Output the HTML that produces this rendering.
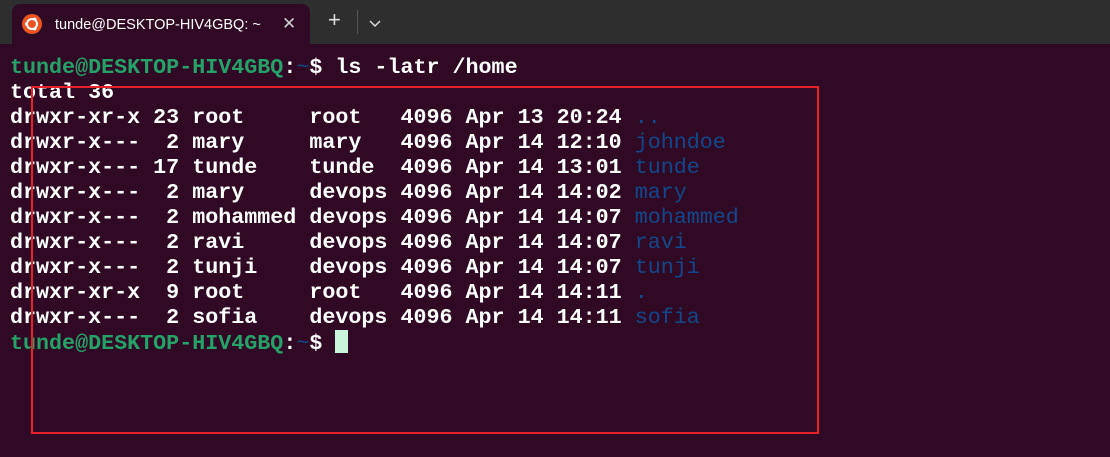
<!DOCTYPE html>
<html><head><style>
body{margin:0;width:1110px;height:457px;background:#300a24;overflow:hidden;position:relative;font-family:"Liberation Sans",sans-serif}
.bar{position:absolute;left:0;top:0;width:1110px;height:44px;background:#2e2e2e}
.tab{position:absolute;left:12px;top:4px;width:298px;height:40px;background:#300a24;border-radius:8px 8px 0 0}
.tt{position:absolute;left:43px;top:13px;color:#fff;font-size:14.5px}
.logo{position:absolute;left:10px;top:10px;width:20px;height:20px;border-radius:50%;background:#e95420}
.x{position:absolute;left:270px;top:10px;color:#ccc;font-size:17px}
.plus{position:absolute;left:328px;top:7px;color:#ddd;font-size:22px}
.sep{position:absolute;left:357px;top:10px;width:1px;height:24px;background:#555}
.chev{position:absolute;left:369px;top:20px}
pre{position:absolute;left:10px;top:55px;margin:0;font-family:"Liberation Mono",monospace;font-size:21.7px;line-height:25px;font-weight:bold;color:#fff}
.g{color:#26a269}.b{color:#12488b;font-weight:normal}
.cur{display:inline-block;width:13px;height:23px;background:#c8f5dc;vertical-align:-4px}
.box{position:absolute;left:31px;top:86px;width:784px;height:344px;border:2px solid #e8202a}
</style></head><body>
<div class="bar"><div class="tab">
<div class="logo"><svg width="20" height="20" viewBox="0 0 20 20"><circle cx="10" cy="10" r="5" fill="none" stroke="#fff" stroke-width="2"/><circle cx="4.5" cy="10" r="1.6" fill="#fff"/><circle cx="12.8" cy="5.2" r="1.6" fill="#fff"/><circle cx="12.8" cy="14.8" r="1.6" fill="#fff"/></svg></div>
<div class="tt">tunde@DESKTOP-HIV4GBQ: ~</div><div class="x">✕</div></div>
<div class="plus">+</div><div class="sep"></div>
<svg class="chev" width="12" height="8" viewBox="0 0 12 8"><path d="M1 1l5 5 5-5" stroke="#ddd" stroke-width="1.5" fill="none"/></svg></div>
<pre><span class="g">tunde@DESKTOP-HIV4GBQ</span>:<span class="b">~</span>$ ls -latr /home
total 36
drwxr-xr-x 23 root     root   4096 Apr 13 20:24 <span class="b">..</span>
drwxr-x---  2 mary     mary   4096 Apr 14 12:10 <span class="b">johndoe</span>
drwxr-x--- 17 tunde    tunde  4096 Apr 14 13:01 <span class="b">tunde</span>
drwxr-x---  2 mary     devops 4096 Apr 14 14:02 <span class="b">mary</span>
drwxr-x---  2 mohammed devops 4096 Apr 14 14:07 <span class="b">mohammed</span>
drwxr-x---  2 ravi     devops 4096 Apr 14 14:07 <span class="b">ravi</span>
drwxr-x---  2 tunji    devops 4096 Apr 14 14:07 <span class="b">tunji</span>
drwxr-xr-x  9 root     root   4096 Apr 14 14:11 <span class="b">.</span>
drwxr-x---  2 sofia    devops 4096 Apr 14 14:11 <span class="b">sofia</span>
<span class="g">tunde@DESKTOP-HIV4GBQ</span>:<span class="b">~</span>$ <span class="cur"></span></pre>
<div class="box"></div>
</body></html>
